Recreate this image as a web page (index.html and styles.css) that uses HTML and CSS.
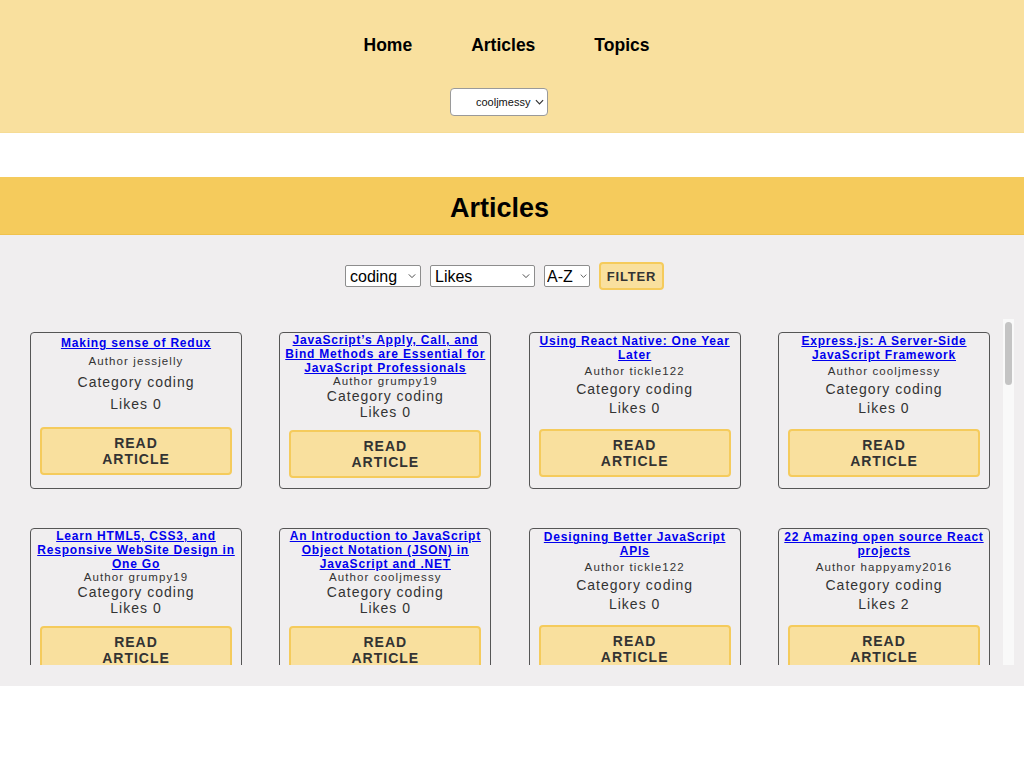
FILE: index.html
```html
<!DOCTYPE html>
<html lang="en">
<head>
<meta charset="utf-8">
<title>NC News - Articles</title>
<link rel="stylesheet" href="styles.css">
</head>
<body>
<header class="site-header">
  <nav class="main-nav">
    <a class="nav-link" href="#">Home</a>
    <a class="nav-link" href="#">Articles</a>
    <a class="nav-link" href="#">Topics</a>
  </nav>
  <div class="user-row">
    <span class="select-wrap">
      <select class="user-select">
        <option>cooljmessy</option>
        <option>jessjelly</option>
        <option>grumpy19</option>
        <option>tickle122</option>
        <option>happyamy2016</option>
        <option>weegembump</option>
      </select>
      <svg class="chevron chevron-user" viewBox="0 0 10 6" width="9" height="6"><path d="M1 1 L5 5 L9 1" fill="none" stroke="#333" stroke-width="1.3"/></svg>
    </span>
  </div>
</header>

<section class="articles-page">
  <h1 class="page-title">Articles</h1>

  <div class="filters">
    <span class="select-wrap">
      <select class="filter-select sel-topic"><option>coding</option><option>football</option><option>cooking</option></select>
      <svg class="chevron" viewBox="0 0 10 6" width="8" height="5"><path d="M1 1 L5 5 L9 1" fill="none" stroke="#444" stroke-width="1.2"/></svg>
    </span>
    <span class="select-wrap">
      <select class="filter-select sel-sort"><option>Likes</option><option>Date</option><option>Comment count</option></select>
      <svg class="chevron" viewBox="0 0 10 6" width="8" height="5"><path d="M1 1 L5 5 L9 1" fill="none" stroke="#444" stroke-width="1.2"/></svg>
    </span>
    <span class="select-wrap">
      <select class="filter-select sel-order"><option>A-Z</option><option>Z-A</option></select>
      <svg class="chevron chevron-order" viewBox="0 0 10 6" width="7" height="5"><path d="M1 1 L5 5 L9 1" fill="none" stroke="#444" stroke-width="1.2"/></svg>
    </span>
    <button class="filter-btn">FILTER</button>
  </div>

  <div class="list-frame">
  <div class="article-scroll">
    <div class="article-grid">
      <div class="card"><a class="card-title" href="#">Making sense of Redux</a><p class="card-author">Author jessjelly</p><p class="card-meta">Category coding</p><p class="card-meta">Likes 0</p><button class="read-btn">READ ARTICLE</button></div>
      <div class="card"><a class="card-title" href="#">JavaScript’s Apply, Call, and Bind Methods are Essential for JavaScript Professionals</a><p class="card-author">Author grumpy19</p><p class="card-meta">Category coding</p><p class="card-meta">Likes 0</p><button class="read-btn">READ ARTICLE</button></div>
      <div class="card"><a class="card-title" href="#">Using React Native: One Year Later</a><p class="card-author">Author tickle122</p><p class="card-meta">Category coding</p><p class="card-meta">Likes 0</p><button class="read-btn">READ ARTICLE</button></div>
      <div class="card"><a class="card-title" href="#">Express.js: A Server-Side JavaScript Framework</a><p class="card-author">Author cooljmessy</p><p class="card-meta">Category coding</p><p class="card-meta">Likes 0</p><button class="read-btn">READ ARTICLE</button></div>

      <div class="card"><a class="card-title" href="#">Learn HTML5, CSS3, and Responsive WebSite Design in One Go</a><p class="card-author">Author grumpy19</p><p class="card-meta">Category coding</p><p class="card-meta">Likes 0</p><button class="read-btn">READ ARTICLE</button></div>
      <div class="card"><a class="card-title" href="#">An Introduction to JavaScript Object Notation (JSON) in JavaScript and .NET</a><p class="card-author">Author cooljmessy</p><p class="card-meta">Category coding</p><p class="card-meta">Likes 0</p><button class="read-btn">READ ARTICLE</button></div>
      <div class="card"><a class="card-title" href="#">Designing Better JavaScript APIs</a><p class="card-author">Author tickle122</p><p class="card-meta">Category coding</p><p class="card-meta">Likes 0</p><button class="read-btn">READ ARTICLE</button></div>
      <div class="card"><a class="card-title" href="#">22 Amazing open source React projects</a><p class="card-author">Author happyamy2016</p><p class="card-meta">Category coding</p><p class="card-meta">Likes 2</p><button class="read-btn">READ ARTICLE</button></div>

      <div class="card"><a class="card-title" href="#">Running a Node App</a><p class="card-author">Author jessjelly</p><p class="card-meta">Category coding</p><p class="card-meta">Likes 0</p><button class="read-btn">READ ARTICLE</button></div>
      <div class="card"><a class="card-title" href="#">The Rise Of Thinking Machines: How IBM's Watson Takes On The World</a><p class="card-author">Author jessjelly</p><p class="card-meta">Category coding</p><p class="card-meta">Likes 0</p><button class="read-btn">READ ARTICLE</button></div>
      <div class="card"><a class="card-title" href="#">Please stop worrying about Angular 3</a><p class="card-author">Author jessjelly</p><p class="card-meta">Category coding</p><p class="card-meta">Likes 0</p><button class="read-btn">READ ARTICLE</button></div>
      <div class="card"><a class="card-title" href="#">Why do England managers keep getting fired?</a><p class="card-author">Author weegembump</p><p class="card-meta">Category football</p><p class="card-meta">Likes 0</p><button class="read-btn">READ ARTICLE</button></div>

      <div class="card"><a class="card-title" href="#">Who are the most followed clubs and players on Instagram?</a><p class="card-author">Author jessjelly</p><p class="card-meta">Category football</p><p class="card-meta">Likes 0</p><button class="read-btn">READ ARTICLE</button></div>
      <div class="card"><a class="card-title" href="#">History of Football</a><p class="card-author">Author grumpy19</p><p class="card-meta">Category football</p><p class="card-meta">Likes 0</p><button class="read-btn">READ ARTICLE</button></div>
      <div class="card"><a class="card-title" href="#">Which current Premier League manager was the best player?</a><p class="card-author">Author tickle122</p><p class="card-meta">Category football</p><p class="card-meta">Likes 0</p><button class="read-btn">READ ARTICLE</button></div>
      <div class="card"><a class="card-title" href="#">The People Tracking Every Touch, Pass And Tackle in the World Cup</a><p class="card-author">Author jessjelly</p><p class="card-meta">Category football</p><p class="card-meta">Likes 0</p><button class="read-btn">READ ARTICLE</button></div>

      <div class="card"><a class="card-title" href="#">Who Will Manage Your Club in 2021?</a><p class="card-author">Author happyamy2016</p><p class="card-meta">Category football</p><p class="card-meta">Likes 0</p><button class="read-btn">READ ARTICLE</button></div>
      <div class="card"><a class="card-title" href="#">What does Jose Mourinho's handwriting say about his personality?</a><p class="card-author">Author weegembump</p><p class="card-meta">Category football</p><p class="card-meta">Likes 0</p><button class="read-btn">READ ARTICLE</button></div>
      <div class="card"><a class="card-title" href="#">Manchester United transfer window</a><p class="card-author">Author cooljmessy</p><p class="card-meta">Category football</p><p class="card-meta">Likes 0</p><button class="read-btn">READ ARTICLE</button></div>
      <div class="card"><a class="card-title" href="#">Sunday league football</a><p class="card-author">Author grumpy19</p><p class="card-meta">Category football</p><p class="card-meta">Likes 0</p><button class="read-btn">READ ARTICLE</button></div>

      <div class="card"><a class="card-title" href="#">Thanksgiving Drinks for Everyone</a><p class="card-author">Author tickle122</p><p class="card-meta">Category cooking</p><p class="card-meta">Likes 0</p><button class="read-btn">READ ARTICLE</button></div>
      <div class="card"><a class="card-title" href="#">High Altitude Cooking</a><p class="card-author">Author happyamy2016</p><p class="card-meta">Category cooking</p><p class="card-meta">Likes 0</p><button class="read-btn">READ ARTICLE</button></div>
      <div class="card"><a class="card-title" href="#">A BRIEF HISTORY OF FOOD—NO BIG DEAL</a><p class="card-author">Author tickle122</p><p class="card-meta">Category cooking</p><p class="card-meta">Likes 0</p><button class="read-btn">READ ARTICLE</button></div>
      <div class="card"><a class="card-title" href="#">Twice-Baked Butternut Squash Is the Thanksgiving Side Dish of Your Dreams</a><p class="card-author">Author jessjelly</p><p class="card-meta">Category cooking</p><p class="card-meta">Likes 0</p><button class="read-btn">READ ARTICLE</button></div>

      <div class="card"><a class="card-title" href="#">What to Cook This Week</a><p class="card-author">Author tickle122</p><p class="card-meta">Category cooking</p><p class="card-meta">Likes 0</p><button class="read-btn">READ ARTICLE</button></div>
      <div class="card"><a class="card-title" href="#">Halal food: Keeping pure and true</a><p class="card-author">Author grumpy19</p><p class="card-meta">Category cooking</p><p class="card-meta">Likes 0</p><button class="read-btn">READ ARTICLE</button></div>
      <div class="card"><a class="card-title" href="#">Stone Soup</a><p class="card-author">Author cooljmessy</p><p class="card-meta">Category cooking</p><p class="card-meta">Likes 0</p><button class="read-btn">READ ARTICLE</button></div>
      <div class="card"><a class="card-title" href="#">The vegan carnivore?</a><p class="card-author">Author happyamy2016</p><p class="card-meta">Category cooking</p><p class="card-meta">Likes 0</p><button class="read-btn">READ ARTICLE</button></div>

      <div class="card"><a class="card-title" href="#">Seafood substitutions are increasing</a><p class="card-author">Author weegembump</p><p class="card-meta">Category cooking</p><p class="card-meta">Likes 0</p><button class="read-btn">READ ARTICLE</button></div>
      <div class="card"><a class="card-title" href="#">The Notorious MSG’s Unlikely Formula For Success</a><p class="card-author">Author grumpy19</p><p class="card-meta">Category cooking</p><p class="card-meta">Likes 0</p><button class="read-btn">READ ARTICLE</button></div>
      <div class="card"><a class="card-title" href="#">Old Ways of Baking Bread</a><p class="card-author">Author tickle122</p><p class="card-meta">Category cooking</p><p class="card-meta">Likes 0</p><button class="read-btn">READ ARTICLE</button></div>
      <div class="card"><a class="card-title" href="#">Sweet Summer Salads</a><p class="card-author">Author jessjelly</p><p class="card-meta">Category cooking</p><p class="card-meta">Likes 0</p><button class="read-btn">READ ARTICLE</button></div>

      <div class="card"><a class="card-title" href="#">Cooking With Seasonal Vegetables</a><p class="card-author">Author cooljmessy</p><p class="card-meta">Category cooking</p><p class="card-meta">Likes 0</p><button class="read-btn">READ ARTICLE</button></div>
      <div class="card"><a class="card-title" href="#">The Best Football Stadiums in Europe</a><p class="card-author">Author happyamy2016</p><p class="card-meta">Category football</p><p class="card-meta">Likes 0</p><button class="read-btn">READ ARTICLE</button></div>
      <div class="card"><a class="card-title" href="#">Learning Python in a Weekend</a><p class="card-author">Author weegembump</p><p class="card-meta">Category coding</p><p class="card-meta">Likes 0</p><button class="read-btn">READ ARTICLE</button></div>
      <div class="card"><a class="card-title" href="#">Football Tactics Explained</a><p class="card-author">Author tickle122</p><p class="card-meta">Category football</p><p class="card-meta">Likes 0</p><button class="read-btn">READ ARTICLE</button></div>

      <div class="card"><a class="card-title" href="#">Testing Node APIs with Jest</a><p class="card-author">Author grumpy19</p><p class="card-meta">Category coding</p><p class="card-meta">Likes 0</p><button class="read-btn">READ ARTICLE</button></div>
    </div>
  </div>
  <div class="scroll-track" aria-hidden="true"><div class="scroll-thumb"></div></div>
  </div>
</section>
</body>
</html>
```

FILE: styles.css
```css
html, body {
  margin: 0;
  padding: 0;
  background: #ffffff;
  font-family: "Liberation Sans", Arial, Helvetica, sans-serif;
  color: #000;
}

/* ---------- header ---------- */
.site-header {
  background: #f9e09e;
  border-bottom: 1px solid #f6dc95;
  height: 133px;
  box-sizing: border-box;
  padding-top: 34px;
}

.main-nav {
  display: flex;
  justify-content: center;
  gap: 59px;
  padding-right: 11px;
  height: 22px;
  align-items: center;
}

.nav-link {
  font-size: 17.5px;
  font-weight: bold;
  color: #000;
  text-decoration: none;
}

.user-row {
  display: flex;
  justify-content: center;
  padding-right: 26px;
  margin-top: 32px;
}

.select-wrap {
  position: relative;
  display: inline-block;
}

.chevron {
  position: absolute;
  top: 50%;
  right: 5px;
  transform: translateY(-50%);
  pointer-events: none;
}

.chevron-user {
  right: 4px;
}

.chevron-order {
  right: 3px;
}

.user-select {
  appearance: none;
  -webkit-appearance: none;
  width: 98px;
  height: 28px;
  box-sizing: border-box;
  background: #ffffff;
  border: 1px solid #9a9a9a;
  border-radius: 4px;
  font-family: "Liberation Sans", Arial, sans-serif;
  font-size: 11px;
  color: #111;
  padding: 0 0 0 25px;
  margin: 0;
  display: block;
}

/* ---------- articles page ---------- */
.articles-page {
  background: #f0eeef;
  padding-bottom: 21px;
  margin-top: 44px;
}

.page-title {
  margin: 0;
  background: #f5cb5c;
  border-bottom: 1px solid #f0c24c;
  height: 58px;
  box-sizing: border-box;
  display: flex;
  align-items: center;
  justify-content: center;
  padding: 6px 25px 0 0;
  font-size: 27px;
  font-weight: bold;
}

.filters {
  display: flex;
  justify-content: center;
  align-items: center;
  gap: 9px;
  padding-right: 15px;
  margin-top: 27px;
  height: 28px;
  margin-bottom: 29px;
}

.filter-select {
  appearance: none;
  -webkit-appearance: none;
  height: 22px;
  box-sizing: border-box;
  background: #ffffff;
  border: 1px solid #8d8d8d;
  border-radius: 2px;
  font-family: "Liberation Sans", Arial, sans-serif;
  font-size: 16px;
  color: #000;
  padding: 0 0 0 4px;
  margin: 0;
  display: block;
}

.sel-topic { width: 76px; }
.sel-sort { width: 105px; }
.sel-order { width: 46px; padding-left: 2px; }

.filter-btn {
  width: 65px;
  height: 28px;
  box-sizing: border-box;
  background: #f9e09e;
  border: 2px solid #f5cb5c;
  border-radius: 4px;
  font-family: "Liberation Sans", Arial, sans-serif;
  font-weight: bold;
  font-size: 13px;
  letter-spacing: 0.8px;
  color: #333;
  padding: 0;
  margin: 0;
}

/* ---------- scroll list ---------- */
.list-frame {
  display: flex;
  height: 346px;
  margin-right: 10px;
}

.article-scroll {
  flex: 1;
  overflow-y: auto;
  scrollbar-width: none;
  box-sizing: border-box;
  padding: 13px 0 0 30px;
}

.scroll-track {
  width: 11px;
  flex-shrink: 0;
  background: #f9f9f9;
  box-sizing: border-box;
  padding: 3px 2px;
}

.scroll-thumb {
  height: 63px;
  background: #c4c4c4;
  border-radius: 4px;
}

.article-grid {
  display: grid;
  grid-template-columns: repeat(4, 212px);
  column-gap: 37.33px;
  row-gap: 39px;
  padding-bottom: 13px;
}

.card {
  height: 157px;
  box-sizing: border-box;
  border: 1px solid #555;
  border-radius: 4px;
  padding: 0 4px;
  display: flex;
  flex-direction: column;
  justify-content: space-around;
  align-items: center;
  text-align: center;
  color: #333;
}

.card-title {
  display: block;
  font-size: 12px;
  line-height: 14px;
  font-weight: bold;
  letter-spacing: 0.8px;
  color: #0000ee;
  text-decoration: underline;
}

.card-author {
  margin: 0;
  font-size: 11.5px;
  line-height: 13px;
  letter-spacing: 1.1px;
}

.card-meta {
  margin: 0;
  font-size: 14px;
  line-height: 16px;
  letter-spacing: 1px;
}

.read-btn {
  flex-shrink: 0;
  width: 192px;
  height: 48px;
  box-sizing: border-box;
  margin: 10px 0;
  padding: 6px 50px;
  background: #f9e09e;
  border: 2px solid #f5cb5c;
  border-radius: 4px;
  font-family: "Liberation Sans", Arial, sans-serif;
  font-weight: bold;
  font-size: 14px;
  line-height: 16px;
  letter-spacing: 1px;
  color: #333;
}
```
